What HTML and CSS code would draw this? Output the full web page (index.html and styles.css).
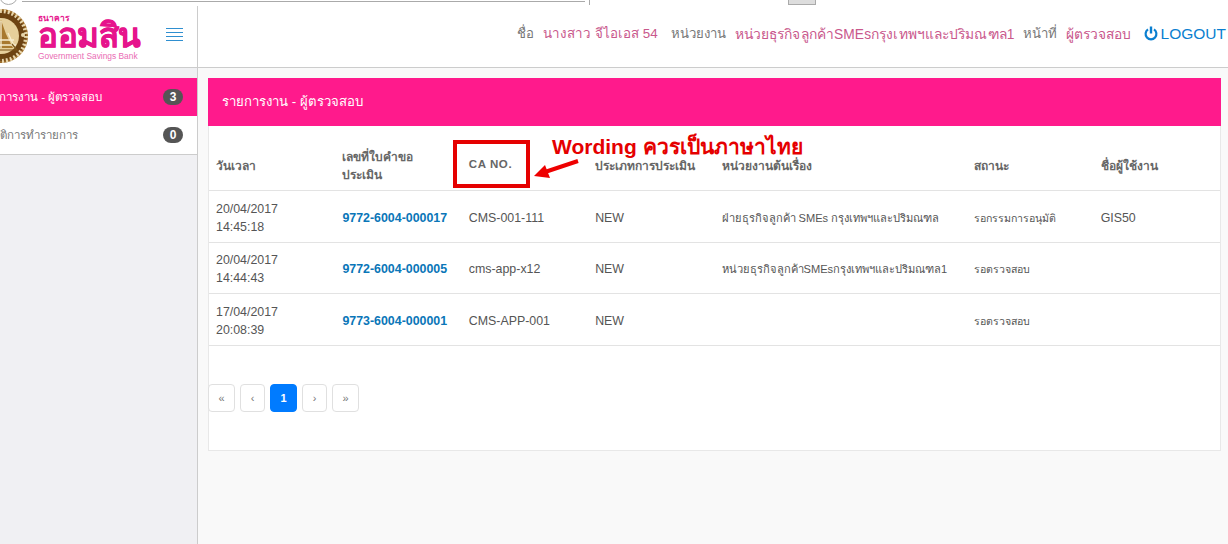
FILE: index.html
```html
<!DOCTYPE html>
<html>
<head>
	<title>รายการงาน - ผู้ตรวจสอบ</title>
	<meta charset="UTF-8">
	<link rel="stylesheet" href="styles.css">
</head>
<body>
	<div class="wrapper">
		<div class="window-edge">
			<span class="edge-circle"></span>
			<span class="edge-line"></span>
			<span class="edge-tick"></span>
			<span class="edge-thumb"></span>
		</div>
		<header class="topbar">
			<div class="brand">
				<svg class="seal" width="46" height="64" viewBox="0 0 46 64">
					<circle cx="1" cy="34" r="27" fill="#9a6a28"/>
					<circle cx="1" cy="34" r="25" fill="#6d4312"/>
					<circle cx="1" cy="34" r="25" fill="none" stroke="#e8d6ac" stroke-width="4" stroke-dasharray="2 2"/>
					<circle cx="1" cy="34" r="18" fill="#e6cf9b"/>
					<path d="M1 18 L6 32 L13 46 H-8 Z" fill="#a8792f"/>
					<path d="M-8 38 H14 M-8 43 H16 M1 19 V46 M8 31 L15 46" stroke="#f7edd0" stroke-width="1.3" fill="none"/>
					<path d="M-12 48 L17 48 L12 42" stroke="#7a5218" stroke-width="1.2" fill="none"/>
					<circle cx="23" cy="33" r="2" fill="#e8d6ac"/>
				</svg>
				<div class="wordmark">
					<span class="wordmark-small">ธนาคาร</span>
					<span class="wordmark-big">ออมสิน</span>
					<span class="wordmark-en">Government Savings Bank</span>
				</div>
				<div class="burger">
					<span></span><span></span><span></span><span></span>
				</div>
			</div>
			<nav class="userinfo">
				<span class="label">ชื่อ</span>
				<span class="value name">นางสาว จีไอเอส 54</span>
				<span class="label">หน่วยงาน</span>
				<span class="value unit">หน่วยธุรกิจลูกค้าSMEsกรุงเทพฯและปริมณฑล1</span>
				<span class="label">หน้าที่</span>
				<span class="value">ผู้ตรวจสอบ</span>
				<a class="logout" href="#">
					<svg width="14" height="15" viewBox="0 0 14 15"><path d="M4 3.4 A5.4 5.4 0 1 0 10 3.4" fill="none" stroke="#0a7fd0" stroke-width="2.2"/><path d="M7 0.5 V7.5" stroke="#0a7fd0" stroke-width="2.4"/></svg>
					LOGOUT
				</a>
			</nav>
		</header>
		<div class="layout">
			<aside class="sidebar">
				<a class="side-item active" href="#"><span>รายการงาน - ผู้ตรวจสอบ</span><b class="badge">3</b></a>
				<a class="side-item history" href="#"><span>ประวัติการทำรายการ</span><b class="badge">0</b></a>
			</aside>
			<main class="content">
				<section class="card">
					<h2 class="card-title">รายการงาน - ผู้ตรวจสอบ</h2>
					<table class="jobs">
						<colgroup>
							<col class="col-n"><col class="col-n"><col class="col-n"><col class="col-n"><col class="col-w"><col class="col-n"><col class="col-n">
						</colgroup>
						<thead>
							<tr>
								<th>วันเวลา</th>
								<th>เลขที่ใบคำขอ<br>ประเมิน</th>
								<th class="spaced">CA NO.</th>
								<th>ประเภทการประเมิน</th>
								<th>หน่วยงานต้นเรื่อง</th>
								<th>สถานะ</th>
								<th>ชื่อผู้ใช้งาน</th>
							</tr>
						</thead>
						<tbody>
							<tr>
								<td>20/04/2017<br>14:45:18</td>
								<td><a href="#">9772-6004-000017</a></td>
								<td>CMS-001-111</td>
								<td>NEW</td>
								<td class="small">ฝ่ายธุรกิจลูกค้า SMEs กรุงเทพฯและปริมณฑล</td>
								<td class="status">รอกรรมการอนุมัติ</td>
								<td>GIS50</td>
							</tr>
							<tr>
								<td>20/04/2017<br>14:44:43</td>
								<td><a href="#">9772-6004-000005</a></td>
								<td>cms-app-x12</td>
								<td>NEW</td>
								<td class="small">หน่วยธุรกิจลูกค้าSMEsกรุงเทพฯและปริมณฑล1</td>
								<td class="status">รอตรวจสอบ</td>
								<td></td>
							</tr>
							<tr>
								<td>17/04/2017<br>20:08:39</td>
								<td><a href="#">9773-6004-000001</a></td>
								<td>CMS-APP-001</td>
								<td>NEW</td>
								<td class="small"></td>
								<td class="status">รอตรวจสอบ</td>
								<td></td>
							</tr>
						</tbody>
					</table>
					<ul class="pager">
						<li><a class="outer" href="#">«</a></li>
						<li><a href="#">‹</a></li>
						<li><a class="current" href="#">1</a></li>
						<li><a href="#">›</a></li>
						<li><a class="outer" href="#">»</a></li>
					</ul>
				</section>
			</main>
		</div>
		<div class="note-box"></div>
		<div class="note-text">Wording ควรเป็นภาษาไทย</div>
		<svg class="note-arrow" width="48" height="22" viewBox="0 0 48 22">
			<path d="M45 3 L12 14" stroke="#ee0000" stroke-width="4"/>
			<path d="M1 18 L12 7 L17 20 Z" fill="#ee0000"/>
		</svg>
	</div>
</body>
</html>
```

FILE: styles.css
```css
body {
	margin: 0;
	padding: 0;
	background-color: #fff;
	font-family: "Liberation Sans", Arial, "Noto Sans", sans-serif;
	color: #555;
}
a {
	text-decoration: none;
}
.wrapper {
	position: relative;
	display: flex;
	flex-direction: column;
	height: 544px;
	overflow: hidden;
}

/* leftovers of the window above the page */
.window-edge span {
	position: absolute;
	top: 0;
	display: block;
}
.window-edge .edge-circle {
	left: -1px;
	top: -14px;
	width: 17px;
	height: 17px;
	border: 1px solid #aaa;
	border-radius: 50%;
}
.edge-line {
	left: 22px;
	width: 563px;
	height: 1px;
	border-bottom: 1px solid #aaa;
}
.edge-tick {
	left: 589px;
	width: 1px;
	height: 5px;
	background-color: #aaa;
}
.edge-thumb {
	left: 788px;
	width: 26px;
	height: 4px;
	background-color: #ddd;
	border: 1px solid #aaa;
	border-top: 0;
}

.topbar {
	display: flex;
	height: 68px;
	box-sizing: border-box;
	flex-shrink: 0;
	border-bottom: 1px solid #ccc;
	background-color: #fff;
}
.brand {
	display: flex;
	flex-shrink: 0;
	align-items: center;
	box-sizing: border-box;
	width: 198px;
	margin-top: 6px;
	border-right: 1px solid #ccc;
}
.seal {
	flex-shrink: 0;
	margin-top: -6px;
	margin-right: -8px;
}
.wordmark {
	display: flex;
	flex-direction: column;
	width: 120px;
	color: #e6148c;
}
.wordmark-small {
	margin-top: 2px;
	margin-bottom: -2px;
	font-size: 8.5px;
	font-weight: bold;
	line-height: 10px;
}
.wordmark-big {
	font-size: 33px;
	font-weight: bold;
	line-height: 29px;
	letter-spacing: -0.5px;
	-webkit-text-stroke: 0.6px #e6148c;
}
.wordmark-en {
	margin-top: 1px;
	font-size: 8.4px;
	line-height: 11px;
	color: #ea6bb4;
	white-space: nowrap;
}
.burger {
	display: flex;
	flex-direction: column;
	gap: 3px;
	flex-shrink: 0;
	width: 17px;
	margin-left: 8px;
	margin-top: -4px;
}
.burger span {
	height: 1px;
	background-color: #2f8fd0;
}
.userinfo {
	display: flex;
	flex-grow: 1;
	justify-content: flex-end;
	align-items: center;
	padding-right: 2px;
	font-size: 13.8px;
	white-space: nowrap;
}
.userinfo .label {
	margin-right: 9px;
	font-size: 13.2px;
	color: #777;
}
.userinfo .value {
	margin-right: 13px;
	color: #c9588c;
}
.userinfo .name {
	font-size: 13.4px;
}
.userinfo .unit {
	margin-right: 8px;
	letter-spacing: 0.1px;
}
.logout {
	display: flex;
	align-items: center;
	gap: 3px;
	color: #0a7fd0;
	font-size: 15.5px;
}

.layout {
	display: flex;
	flex-grow: 1;
}
.sidebar {
	flex-shrink: 0;
	box-sizing: border-box;
	width: 198px;
	padding-top: 10px;
	background-color: #f0f0f3;
	border-right: 1px solid #ccc;
}
.side-item {
	display: flex;
	align-items: center;
	justify-content: space-between;
	height: 39px;
	padding-right: 14px;
	background-color: #fff;
	border-bottom: 1px solid #ccc;
	box-sizing: border-box;
	font-size: 11.5px;
	color: #777;
	overflow: hidden;
	white-space: nowrap;
}
.side-item span {
	margin-left: -20px;
}
.side-item.history span {
	margin-left: -25px;
}
.side-item.active {
	height: 38px;
	background-color: #ff1a8c;
	color: #fff;
	border-bottom: 0;
}
.badge {
	min-width: 20px;
	height: 16px;
	line-height: 16px;
	border-radius: 8px;
	background-color: #555;
	color: #fff;
	font-size: 12px;
	text-align: center;
}

.content {
	flex-grow: 1;
	min-width: 0;
	padding: 10px 7px 0 10px;
	background-color: #f9f9f9;
}
.card {
	height: 373px;
	box-sizing: border-box;
	background-color: #fff;
	border: 1px solid #e8e8e8;
	border-top: 0;
}
.card-title {
	margin: 0 -1px;
	padding: 0 14px;
	height: 48px;
	line-height: 48px;
	background-color: #ff1a8c;
	color: #fff;
	font-size: 13.2px;
	font-weight: normal;
}
.jobs {
	table-layout: fixed;
	width: 100%;
	border-collapse: collapse;
	font-size: 12.4px;
}
.col-n {
	width: 12.5%;
}
.col-w {
	width: 25%;
}
.jobs th {
	height: 64px;
	box-sizing: border-box;
	padding: 16px 7px 0;
	text-align: left;
	font-size: 12px;
	line-height: 18px;
	color: #666;
	border-bottom: 1px solid #e3e3e3;
}
.jobs th.spaced {
	padding-top: 12px;
	font-size: 11.5px;
	letter-spacing: 0.6px;
}
.jobs td {
	height: 52px;
	box-sizing: border-box;
	padding: 3px 7px 0;
	line-height: 18px;
	border-bottom: 1px solid #e3e3e3;
}
.jobs tr:nth-child(2) td {
	height: 51px;
	padding-top: 2px;
}
.jobs td.small {
	font-size: 11.1px;
}
.jobs td.status {
	font-size: 10.6px;
}
.jobs td a {
	color: #0a76b8;
	font-weight: bold;
}

.pager {
	display: flex;
	gap: 5px;
	list-style: none;
	margin: 38px 0 0 -1px;
	padding: 0;
}
.pager a {
	display: block;
	box-sizing: border-box;
	width: 25px;
	height: 28px;
	line-height: 26px;
	border: 1px solid #e0e0e0;
	border-radius: 4px;
	background-color: #fff;
	color: #777;
	font-size: 11px;
	text-align: center;
}
.pager a.outer {
	width: 27px;
}
.pager a.current {
	width: 27px;
	border-color: #007bff;
	background-color: #007bff;
	color: #fff;
	font-weight: bold;
}

/* red review marks drawn over the screenshot */
.note-box {
	position: absolute;
	left: 453px;
	top: 140px;
	width: 69px;
	height: 40px;
	border: 4px solid #e50000;
}
.note-text {
	position: absolute;
	left: 552px;
	top: 130px;
	color: #e50000;
	font-size: 21px;
	font-weight: bold;
	white-space: nowrap;
}
.note-arrow {
	position: absolute;
	left: 533px;
	top: 158px;
}
```
